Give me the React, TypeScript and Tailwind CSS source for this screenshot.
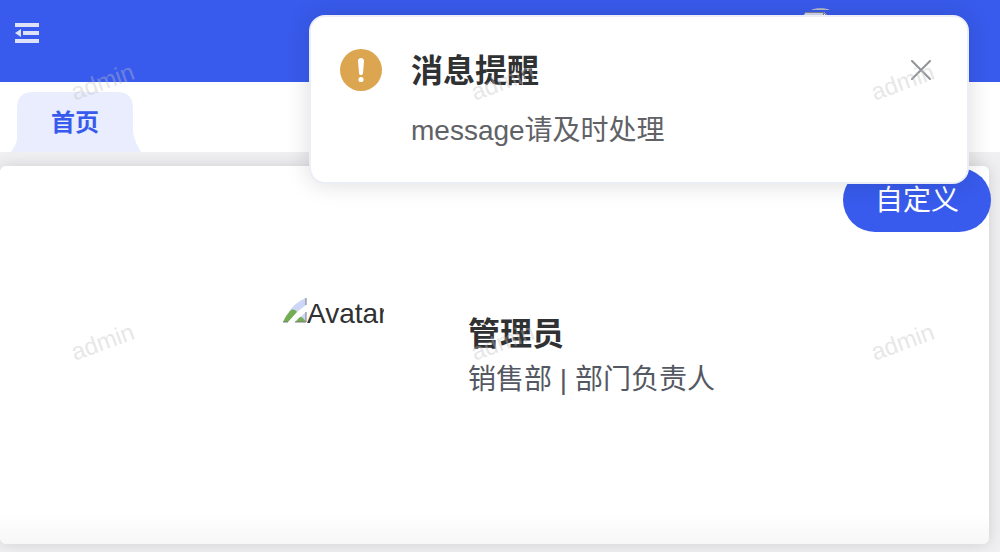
import { FC } from "react";

const MenuFoldIcon: FC = () => (
  <svg width="24" height="20" viewBox="0 0 24 20" fill="#dde2f9">
    <path d="M0 0h24v4H0zM8 8h16v4H8zM0 16h24v4H0zM0 10l6-4v8z" />
  </svg>
);

const HeaderAvatar: FC = () => (
  <svg width="34" height="34" viewBox="0 0 34 34" fill="none">
    <path d="M8 2C12-.3 23-.3 27 2z" fill="#bcbec4" />
    <path d="M0 8l3-4h18l4 4v18H0z" fill="#d2daf5" />
    <path d="M2 4.500h19" stroke="#85868e" />
    <path d="M21 5v5h4z" fill="#fff" />
    <path d="M20.500 4v5M21 5l4 4" stroke="#85868e" />
  </svg>
);

const WarningIcon: FC = () => (
  <svg width="42" height="42" viewBox="0 0 42 42">
    <circle cx="21" cy="21" r="21" fill="#dca550" />
    <path
      d="M21 9c-1.900 0-3.200 1.300-3 3.200l1 12c.1 1.200.9 1.800 2 1.800s1.900-.6 2-1.800l1-12C24.200 10.300 22.900 9 21 9z"
      fill="#fff"
    />
    <circle cx="21" cy="30.500" r="2.600" fill="#fff" />
  </svg>
);

const BrokenImageIcon: FC = () => (
  <svg width="24" height="26" viewBox="0 0 24 26" className="shrink-0">
    <path d="M23 0C16 3 10 7 6 14h8l9-7z" fill="#cdd6f6" />
    <path d="M0 24C2 19 5 15 8 12c2-1 5 0 6 2L5 24z" fill="#74ad52" />
    <path d="M23 14l-9 8 9 2z" fill="#cdd6f6" />
    <path d="M12 24l5-5c3 0 4 2 6 5z" fill="#74ad52" />
    <path d="M0 24h5M12 24h11V14M23 0v7" stroke="#777b80" fill="none" />
  </svg>
);

const Notification: FC = () => (
  <div
    role="alert"
    className="absolute top-[15px] right-[31px] z-20 flex w-[660px] items-start rounded-2xl border-2 border-[#ebeef5] bg-white pt-[30px] pr-8 pb-[27px] pl-[29px] shadow-[0_0_24px_rgba(0,0,0,0.14)]"
  >
    <div className="mt-0.5 shrink-0">
      <WarningIcon />
    </div>
    <div className="ml-[29px] grow">
      <h2 className="text-[32px] leading-12 font-bold text-[#303133]">
        消息提醒
      </h2>
      <p className="mt-3 text-[28px] leading-12 text-[#606266]">
        message请及时处理
      </p>
    </div>
    <button type="button" aria-label="关闭" className="mt-[9px] shrink-0 p-1">
      <svg width="20" height="20" viewBox="0 0 20 20">
        <path
          d="M1 1l18 18M19 1L1 19"
          stroke="#909399"
          strokeWidth="2"
          strokeLinecap="round"
        />
      </svg>
    </button>
  </div>
);

const marks = Array.from({ length: 6 }, (_, i) => i);

const Watermark: FC = () => (
  <div
    aria-hidden="true"
    className="pointer-events-none absolute inset-0 z-30 grid auto-rows-[260px] grid-cols-[repeat(3,400px)] overflow-hidden"
  >
    {marks.map((mark) => (
      <div key={mark} className="pt-[66px] pl-[70px]">
        <span className="inline-block -rotate-20 text-2xl leading-8 text-[#c0c0c0]/40">
          admin
        </span>
      </div>
    ))}
  </div>
);

const App: FC = () => {
  return (
    <div className="relative flex min-h-screen flex-col overflow-hidden bg-[#f0f0f2] font-['Liberation_Sans','Noto_Sans_CJK_SC',sans-serif]">
      <header className="flex h-[82px] items-start justify-between bg-[#385bed] pr-[163px] pl-[15px]">
        <button type="button" aria-label="收起菜单" className="mt-[23px]">
          <MenuFoldIcon />
        </button>
        <div className="mt-2">
          <HeaderAvatar />
        </div>
      </header>

      <nav className="flex h-[70px] items-end bg-white pl-[11px]">
        <a
          href="#home"
          className="relative flex h-15 w-[130px] items-center justify-center pt-0.5 pr-0.5 text-2xl font-bold text-[#385bed]"
        >
          <svg
            className="absolute inset-0"
            width="130"
            height="60"
            viewBox="0 0 130 60"
          >
            <path
              d="M0 60Q6 52 6 46V16Q6 0 22 0H106Q122 0 122 16V40Q124 51 130 60z"
              fill="#e9edfd"
            />
          </svg>
          <span className="relative">首页</span>
        </a>
      </nav>

      <main className="flex grow flex-col pt-3.5 pr-[11px] pb-2">
        <section className="relative flex grow items-start justify-center rounded-md bg-linear-to-b from-white from-92% to-[#f7f7f8] pt-32 pr-1.5 pb-32 shadow-[0_0_16px_rgba(0,0,0,0.14)]">
          <button
            type="button"
            className="absolute top-0.5 -right-0.5 h-16 w-[148px] rounded-full bg-[#385bed] pt-0.5 text-[28px] text-white"
          >
            自定义
          </button>
          <div
            role="img"
            aria-label="Avatar"
            className="mt-1 flex w-[136px] items-start pr-5 pl-[15px]"
          >
            <BrokenImageIcon />
            <span className="w-[77px] overflow-hidden text-[28px] leading-8 whitespace-nowrap text-[#303133]">
              Avatar
            </span>
          </div>
          <div className="ml-16 pt-4">
            <h1 className="text-[32px] leading-12 font-bold text-[#303133]">
              管理员
            </h1>
            <p className="text-[28px] leading-11 text-[#545863]">
              销售部 | 部门负责人
            </p>
          </div>
        </section>
      </main>

      <Notification />
      <Watermark />
    </div>
  );
};

export default App;
